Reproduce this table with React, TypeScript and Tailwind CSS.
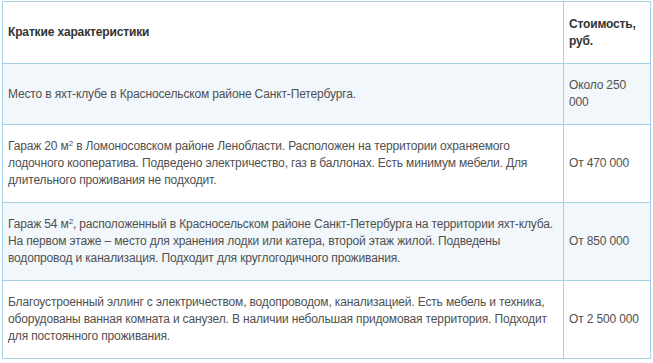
const rows: { text: React.ReactNode; price: string }[] = [
  {
    text: "Место в яхт-клубе в Красносельском районе Санкт-Петербурга.",
    price: "Около 250 000",
  },
  {
    text: (
      <>
        Гараж 20 м<sup className="text-[8px] leading-none">2</sup> в Ломоносовском районе Ленобласти.
        Расположен на территории охраняемого лодочного кооператива. Подведено электричество, газ в
        баллонах. Есть минимум мебели. Для длительного проживания не подходит.
      </>
    ),
    price: "От 470 000",
  },
  {
    text: (
      <>
        Гараж 54 м<sup className="text-[8px] leading-none">2</sup>, расположенный в Красносельском
        районе Санкт-Петербурга на территории яхт-клуба. На первом этаже – место для хранения лодки
        или катера, второй этаж жилой. Подведены водопровод и канализация. Подходит для
        круглогодичного проживания.
      </>
    ),
    price: "От 850 000",
  },
  {
    text: "Благоустроенный эллинг с электричеством, водопроводом, канализацией. Есть мебель и техника, оборудованы ванная комната и санузел. В наличии небольшая придомовая территория. Подходит для постоянного проживания.",
    price: "От 2 500 000",
  },
];

export default function App() {
  return (
    <div className="min-h-[363px] bg-white pl-[2px] pt-[1px] font-['Liberation_Sans',Arial,sans-serif] text-[12px] leading-[17px] tracking-[-0.15px]">
      <table className="w-[649px] table-fixed border-collapse">
        <colgroup>
          <col className="w-[561px]" />
          <col />
        </colgroup>
        <thead>
          <tr className="h-[62px]">
            <th className="border border-[#a3d2e4] px-[5px] text-left align-middle font-bold text-[#333]">
              Краткие характеристики
            </th>
            <th className="border border-[#a3d2e4] px-[5px] text-left align-middle font-bold text-[#333]">
              Стоимость, руб.
            </th>
          </tr>
        </thead>
        <tbody>
          {rows.map((row, i) => (
            <tr key={i} className={i % 2 === 0 ? "bg-[#f2f7fb]" : "bg-white"}>
              <td className="border border-[#a3d2e4] px-[5px] py-[13px] align-middle text-[#505050]">
                {row.text}
              </td>
              <td className="border border-[#a3d2e4] px-[5px] py-[13px] align-middle text-[#505050]">
                {row.price}
              </td>
            </tr>
          ))}
        </tbody>
      </table>
    </div>
  );
}
